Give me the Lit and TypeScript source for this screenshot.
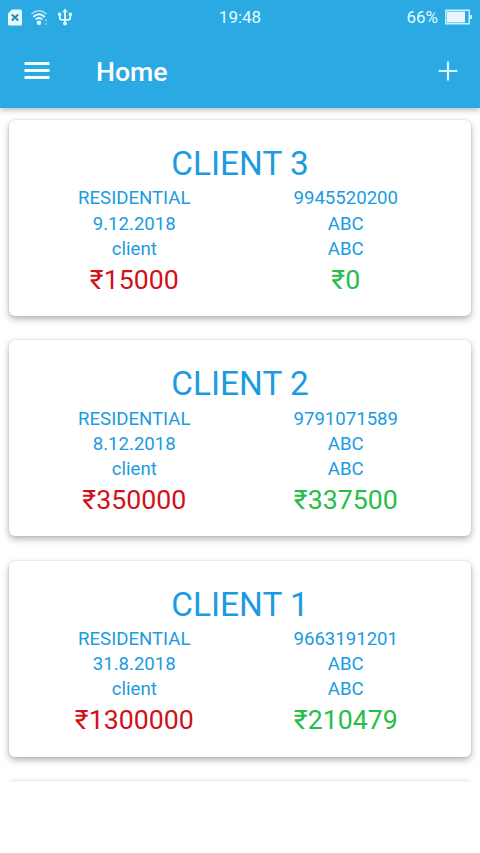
import { LitElement, html, css } from "lit";
import { customElement } from "lit/decorators.js";

const clients = [
  { name: "CLIENT 3", phone: "9945520200", date: "9.12.2018", due: "₹15000", paid: "₹0" },
  { name: "CLIENT 2", phone: "9791071589", date: "8.12.2018", due: "₹350000", paid: "₹337500" },
  { name: "CLIENT 1", phone: "9663191201", date: "31.8.2018", due: "₹1300000", paid: "₹210479" },
];

@customElement("app-root")
export class AppRoot extends LitElement {
  static styles = css`
    :host { display: flex; flex-direction: column; height: 853px; overflow: hidden; background: #fff; font-family: Roboto, "Noto Sans", sans-serif; color: #1b9be0; }
    * { box-sizing: border-box; }
    .top { height: 108px; flex: none; background: #2aa9e3; color: #fff; box-shadow: 0 2px 6px rgba(0,0,0,.28); z-index: 1; }
    .status { height: 36px; display: grid; grid-template-columns: 1fr auto 1fr; align-items: center; padding: 0 8px 2px; font-size: 17px; color: #e4fbff; }
    .left { display: flex; align-items: center; }
    .sim { margin-right: 9px; }
    .wifi { margin-right: 10px; }
    .right { display: flex; align-items: center; justify-content: flex-end; gap: 7px; }
    .bar { height: 72px; display: flex; align-items: center; padding: 0 22px 2px 24px; }
    h1 { margin: 2px 0 0 46px; font-size: 26.7px; font-weight: 500; flex: 1; line-height: 30px; }
    svg { display: block; flex: none; }
    .list { height: 673.5px; overflow: hidden; padding: 12px 9px 0; display: flex; flex-direction: column; gap: 24.3px; }
    .card { height: 196px; flex: none; border-radius: 6px; background: #fff; box-shadow: 0 3px 7px rgba(0,0,0,.3), 0 0 2px rgba(0,0,0,.14); padding-top: 24px; }
    .name { font-size: 33.4px; line-height: 40px; text-align: center; }
    .cols { display: grid; grid-template-columns: 211.5px 211.5px; justify-content: center; text-align: center; margin-top: 2.3px; }
    .line { font-size: 18.6px; line-height: 25.3px; }
    .sum { font-size: 26.7px; line-height: 36px; margin-top: -0.3px; }
    .due { color: #d2101a; }
    .paid { color: #27bd4b; }
  `;

  render() {
    return html`
      <div class="top">
        <div class="status">
          <div class="left">
            <svg class="sim" width="14" height="17" viewBox="0 0 14 17"><path d="M4 .5H12.500Q14 .5 14 2V15Q14 16.500 12.500 16.500H1.500Q0 16.500 0 15V4.500Z" fill="#e4fbff"/><path d="M3.800 5.600l6.400 6M10.200 5.600l-6.400 6" stroke="#2489bd" stroke-width="2"/></svg>
            <svg class="wifi" width="17" height="17" viewBox="0 0 17 17" fill="none" stroke="#e4fbff"><path d="M.5 5Q8-1.500 15.500 5" stroke-width="1.400" opacity=".7"/><path d="M2.300 8Q8 2.500 13.700 8" stroke-width="2"/><path d="M4.700 10.600Q8 7.500 11.300 10.600" stroke-width="1.800"/><circle cx="8" cy="13.800" r="2.300" fill="#e4fbff" stroke="none"/><path d="M15 10v2.500M15 14v2" stroke-width="1.500" opacity=".5"/></svg>
            <svg width="14" height="18" viewBox="0 0 14 18" fill="none" stroke="#e4fbff" stroke-width="1.800"><path d="M7 3v13M1.700 6v3.500Q1.700 11.800 4 11.800H10Q12.300 11.800 12.300 9.500V6"/><path d="M7 .5L9.700 4.300h-5.400zM.2 4.800h3v3h-3zM10.800 4.800h3v3h-3z" fill="#e4fbff" stroke="none"/><circle cx="7" cy="15.500" r="2" fill="#e4fbff" stroke="none"/></svg>
          </div>
          <div>19:48</div>
          <div class="right"><span>66%</span>
            <svg width="27" height="16" viewBox="0 0 27 16"><path d="M.8 1.300h23.400v13.400H.8z" fill="none" stroke="#c5f5fb" stroke-width="1.500"/><path d="M2 2.500h18v11H2z" fill="#e8f5fd"/><path d="M25 6h2v4h-2z" fill="#c5f5fb"/></svg>
          </div>
        </div>
        <div class="bar">
          <svg width="26" height="20" viewBox="0 0 26 20"><path d="M.5 2.500h25M.5 9.500h25M.5 16.500h25" stroke="#effdff" stroke-width="3"/></svg>
          <h1>Home</h1>
          <svg width="20" height="20" viewBox="0 0 20 20"><path d="M.5 10h19M10 .5v19" stroke="#d8fbff" stroke-width="2.200"/></svg>
        </div>
      </div>
      <div class="list">
        ${clients.map((c) => html`<div class="card">
          <div class="name">${c.name}</div>
          <div class="cols">
            <div><div class="line">RESIDENTIAL</div><div class="line">${c.date}</div><div class="line">client</div><div class="sum due">${c.due}</div></div>
            <div><div class="line">${c.phone}</div><div class="line">ABC</div><div class="line">ABC</div><div class="sum paid">${c.paid}</div></div>
          </div>
        </div>`)}
        <div class="card"></div>
      </div>`;
  }
}
